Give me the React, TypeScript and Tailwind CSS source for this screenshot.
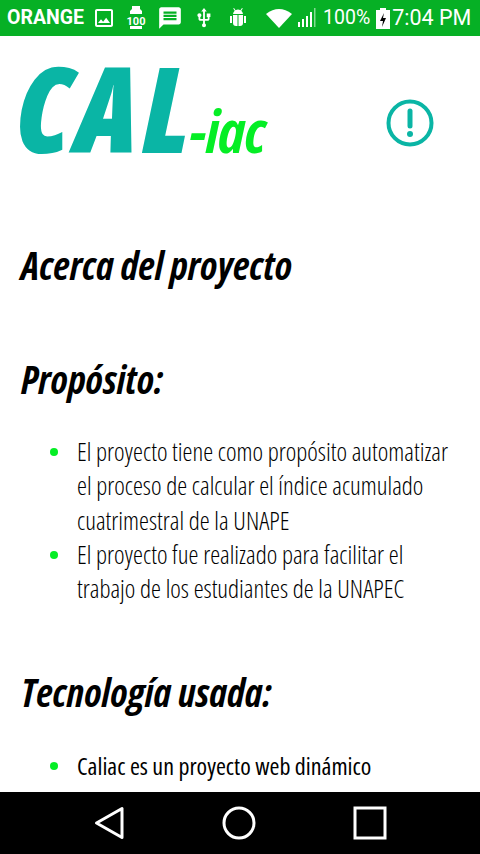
import { MdMessage, MdOutlineImage, MdUsb } from "react-icons/md";

const brush = "font-['Open_Sans',sans-serif] font-bold italic [font-stretch:75%]";
const body = "font-['Open_Sans',sans-serif] font-light [font-stretch:75%]";

function StatusBar() {
  return (
    <div className="flex h-9 shrink-0 items-center bg-[#06b025] pl-[7px] text-white">
      <span className="font-['Roboto',sans-serif] text-[19.5px] font-bold leading-none">ORANGE</span>
      <MdOutlineImage className="ml-[8px] text-[24px]" />
      <svg viewBox="0 0 20 24" className="ml-[10px] h-[24px] w-[20px]" fill="currentColor">
        <path d="M6 0h8v3l2 2v3H4V5l2-2zM4 20h12v3H4z" />
        <text x="10" y="18.5" textAnchor="middle" fontSize="11" fontFamily="Roboto, sans-serif" fontWeight="700">100</text>
      </svg>
      <MdMessage className="ml-[11px] text-[26px]" />
      <MdUsb className="ml-[10px] text-[22px]" />
      <svg viewBox="0 0 18 20" className="ml-[14px] h-[20px] w-[18px]" fill="currentColor">
        <path d="M5 0l1.6 2.2a5 5 0 0 1 4.8 0L13 0l.8.6-1.5 2.2A5 5 0 0 1 14 6H4a5 5 0 0 1 1.7-3.2L4.200.6z" />
        <path d="M4 7h4.500v11H7a3 3 0 0 1-3-3zM9.500 7H14v8a3 3 0 0 1-3 3H9.500z" />
        <path d="M1 8h2v7H1zM15 8h2v7h-2z" />
      </svg>
      <svg viewBox="0 0 26 20" className="ml-[19px] h-[20px] w-[26px]" fill="currentColor">
        <path d="M0 6Q13-4 26 6L13 20z" />
      </svg>
      <svg viewBox="0 0 18 20" className="ml-[6px] h-[20px] w-[18px]" fill="currentColor">
        <path d="M0 14h2v5H0zM4 11h2v8H4zM8 8h2v11H8zM12 4h2v15h-2z" />
        <path d="M16 0h1.5v19H16z" opacity="0.5" />
      </svg>
      <span className="ml-[7px] font-['Roboto',sans-serif] text-[19.5px] leading-none">100%</span>
      <svg viewBox="0 0 14 22" className="ml-[6px] h-[22px] w-[14px]">
        <path d="M4 1h6v2h4v19H0V3h4z" fill="#fff" />
        <path d="M8 6l-4 8h3l-1 6 4-9H7z" fill="#000" />
      </svg>
      <span className="ml-[2px] font-['Roboto',sans-serif] text-[21.5px] leading-none">7:04 PM</span>
    </div>
  );
}

function Logo() {
  return (
    <div className="flex h-[144px] items-start justify-between pl-[16px] pr-[46px]">
      <div className={`${brush} flex items-baseline pt-[13px] leading-none`}>
        <span className="text-[118px] font-extrabold tracking-[4px] text-[#0ab5a5]">CAL</span>
        <span className="ml-[-4px] text-[60px] tracking-[-1px] text-[#05ee25]">-iac</span>
      </div>
      <svg viewBox="0 0 48 48" className="mt-[63px] h-[48px] w-[48px]" fill="none" stroke="#0ab5a5">
        <circle cx="24" cy="24" r="21.5" strokeWidth="4" />
        <path d="M24 12v15" strokeWidth="5" strokeLinecap="round" />
        <circle cx="24" cy="35" r="3" fill="#0ab5a5" stroke="none" />
      </svg>
    </div>
  );
}

function Heading({ children, className }: { children: string; className: string }) {
  return <h2 className={`${brush} pl-[21px] text-[39px] leading-none text-black ${className}`}>{children}</h2>;
}

function Item({ children, dark }: { children: string; dark?: boolean }) {
  return (
    <li className="relative">
      <span className="absolute left-[-27px] top-[14px] h-[8px] w-[8px] rounded-full bg-[#05ee25]" />
      <span className={dark ? "text-[24px] font-normal" : ""}>{children}</span>
    </li>
  );
}

function BulletList({ children, className }: { children: React.ReactNode; className: string }) {
  return (
    <ul className={`${body} pl-[77px] pr-[20px] text-[25.15px] leading-[34.3px] text-black ${className}`}>{children}</ul>
  );
}

function NavBar() {
  return (
    <div className="flex h-[62px] shrink-0 items-center justify-between bg-black pl-[94px] pr-[93px] text-white">
      <svg viewBox="0 0 30 34" className="h-[34px] w-[30px]" fill="none" stroke="currentColor" strokeWidth="3">
        <path d="M28 2.5v29L2.5 17z" strokeLinejoin="round" />
      </svg>
      <svg viewBox="0 0 34 34" className="h-[34px] w-[34px]" fill="none" stroke="currentColor" strokeWidth="3">
        <circle cx="17" cy="17" r="15" />
      </svg>
      <svg viewBox="0 0 34 34" className="h-[34px] w-[34px]" fill="none" stroke="currentColor" strokeWidth="3">
        <rect x="2" y="2" width="30" height="30" />
      </svg>
    </div>
  );
}

export default function App() {
  return (
    <div className="flex h-[854px] w-[480px] flex-col overflow-hidden bg-white">
      <StatusBar />
      <main className="min-h-0 flex-1 overflow-hidden">
        <Logo />
        <Heading className="mt-[65px]">Acerca del proyecto</Heading>
        <Heading className="mt-[75px]">Propósito:</Heading>
        <BulletList className="mt-[36px]">
          <Item>El proyecto tiene como propósito automatizar el proceso de calcular el índice acumulado cuatrimestral de la UNAPE</Item>
          <Item>El proyecto fue realizado para facilitar el trabajo de los estudiantes de la UNAPEC</Item>
        </BulletList>
        <Heading className="mt-[67px]">Tecnología usada:</Heading>
        <BulletList className="mt-[37px]">
          <Item dark>Caliac es un proyecto web dinámico desarrollado usando</Item>
        </BulletList>
      </main>
      <NavBar />
    </div>
  );
}
